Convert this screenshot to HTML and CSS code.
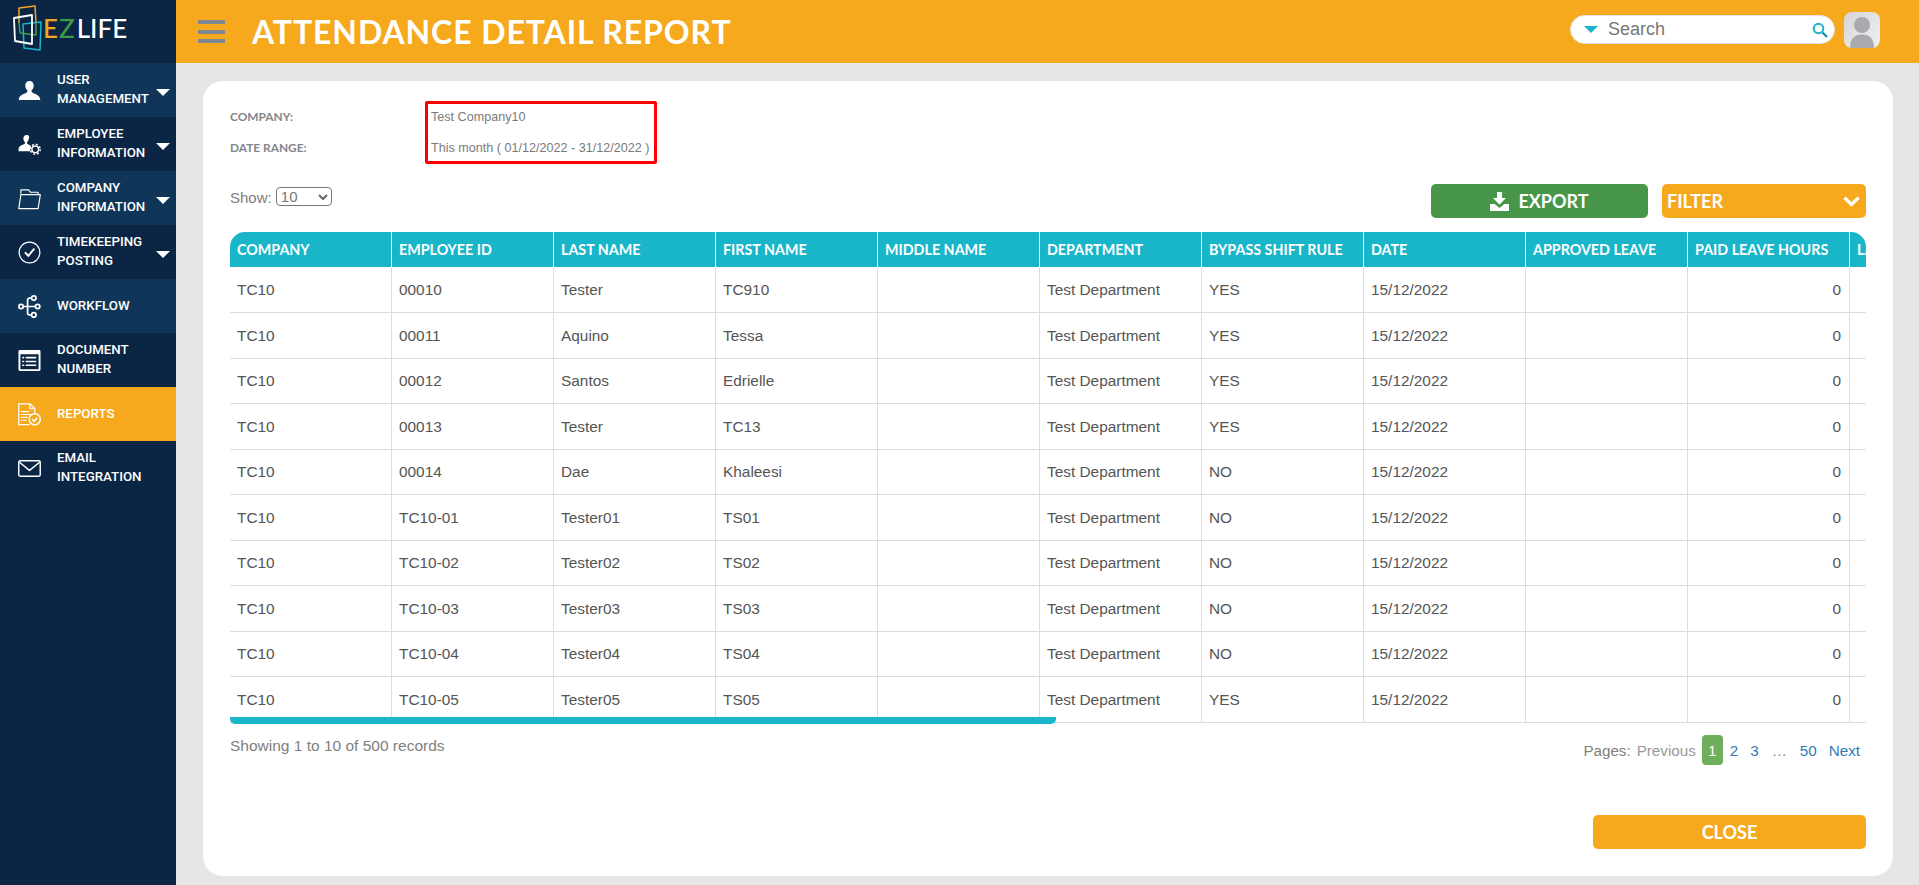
FILE: index.html
```html
<!DOCTYPE html>
<html lang="en">
<head>
<meta charset="utf-8">
<title>Attendance Detail Report</title>
<link rel="stylesheet" href="styles.css">
</head>
<body>
<aside class="sidebar">
  <div class="logo">
    <svg class="logo-mark" width="32" height="46" viewBox="0 0 32 46" fill="none" stroke-width="1.500" stroke-linejoin="round">
      <path d="M6 18V3l16-2 1 17" stroke="#f2a71f"/>
      <path d="M6 18l1 10 16 2V18" stroke="#4c9a44"/>
      <path d="M10 19l18-2-1 28-16-2z" stroke="#19b5c9"/>
      <path d="M1 13l18-3v29L2 36z" stroke="#ffffff" stroke-width="1.800"/>
    </svg>
    <span class="logo-text"><span class="logo-e">E</span><span class="logo-z">Z</span>LIFE</span>
  </div>
  <nav class="menu">
    <a class="menu-item alt">
      <svg class="menu-icon" viewBox="0 0 24 24" fill="#fff"><path d="M12 2c-3 0-4.600 2.200-4.400 5.200.1 1.800 1 3.600 2.200 4.600.3 1.300-.3 2.200-1.500 2.800C6 15.800 2.200 16.400.9 20.500L.8 22h22.400l-.1-1.500c-1.300-4.100-5.100-4.700-7.400-5.900-1.200-.6-1.800-1.500-1.500-2.800 1.200-1 2.100-2.800 2.200-4.600C16.600 4.200 15 2 12 2z"/></svg>
      <span class="menu-label">USER MANAGEMENT</span><i class="caret"></i>
    </a>
    <a class="menu-item">
      <svg class="menu-icon" viewBox="0 0 24 24" fill="#fff"><path d="M9 2c-2.400 0-3.600 1.800-3.400 4.100.1 1.400.8 2.700 1.700 3.500.2 1-.2 1.700-1.200 2.200C4.300 12.800.9 13.300.6 16.800V19h12.200a6 6 0 0 1 .9-5.400c-1.200-.8-2.400-1.200-3-1.800-1-.5-1.400-1.200-1.200-2.200.9-.8 1.600-2.100 1.700-3.500C12.400 3.800 11.400 2 9 2z"/><circle cx="18" cy="17" r="3.500" fill="none" stroke="#fff" stroke-width="1.600"/><circle cx="18" cy="17" r="5.200" fill="none" stroke="#fff" stroke-width="1.500" stroke-dasharray="2 2.080"/></svg>
      <span class="menu-label">EMPLOYEE INFORMATION</span><i class="caret"></i>
    </a>
    <a class="menu-item alt">
      <svg class="menu-icon" viewBox="0 0 24 24" fill="none" stroke="#fff" stroke-width="1.200" stroke-linejoin="round"><path d="M3 7V3h8l2 2.500h8V8"/><path d="M3 8h20.300l-2.300 14.500H.8z"/></svg>
      <span class="menu-label">COMPANY INFORMATION</span><i class="caret"></i>
    </a>
    <a class="menu-item">
      <svg class="menu-icon" viewBox="0 0 24 24" fill="none" stroke="#fff" stroke-linecap="round"><circle cx="12" cy="12" r="10.800" stroke-width="1.300"/><path d="M7.800 12.400l3 3 5.800-6.800" stroke-width="2"/></svg>
      <span class="menu-label">TIMEKEEPING POSTING</span><i class="caret"></i>
    </a>
    <a class="menu-item alt">
      <svg class="menu-icon" viewBox="0 0 24 24" fill="none" stroke="#fff" stroke-width="1.800"><circle cx="3.200" cy="12" r="2.300"/><circle cx="16.500" cy="3.200" r="2.300"/><circle cx="20.500" cy="12" r="2.300"/><circle cx="16.500" cy="20.800" r="2.300"/><path d="M5.500 12h12.700M14.200 3.200H12a2 2 0 0 0-2 2v13.600a2 2 0 0 0 2 2h2.200"/></svg>
      <span class="menu-label">WORKFLOW</span>
    </a>
    <a class="menu-item">
      <svg class="menu-icon" viewBox="0 0 24 24" fill="none"><path fill="#fff" fill-rule="evenodd" d="M2 1h20a1.500 1.500 0 0 1 1.500 1.500v19a1.500 1.500 0 0 1-1.500 1.500H2a1.500 1.500 0 0 1-1.500-1.500v-19A1.500 1.500 0 0 1 2 1zm.5 4.500V21h19V5.500z"/><path stroke="#fff" stroke-width="1.700" d="M4.500 9h2M8 9h11M4.500 13h2M8 13h11M4.500 17h2M8 17h11"/></svg>
      <span class="menu-label">DOCUMENT NUMBER</span>
    </a>
    <a class="menu-item active">
      <svg class="menu-icon" viewBox="0 0 24 24" fill="none" stroke="#fff" stroke-width="1.300"><path d="M12 22.500H.8V.8h11.700l5 5v5.500"/><path d="M12.500 1v5h5"/><path stroke-width="1.200" d="M3 9h9M3 12h10M3 15h7M3 18h6"/><circle cx="17.500" cy="17" r="5.800" stroke-width="1.500" fill="#f6a91d"/><path d="M14.800 17l2 2 3.200-3.600" stroke-width="1.700"/></svg>
      <span class="menu-label">REPORTS</span>
    </a>
    <a class="menu-item">
      <svg class="menu-icon" viewBox="0 0 24 24" fill="none" stroke="#fff" stroke-width="1.500" stroke-linejoin="round"><rect x=".8" y="4" width="22.400" height="16" rx="1.500"/><path d="M1.500 5.500L12 14l10.500-8.500"/></svg>
      <span class="menu-label">EMAIL INTEGRATION</span>
    </a>
  </nav>
</aside>

<div class="main">
  <header class="topbar">
    <div class="burger"><span></span><span></span><span></span></div>
    <h1 class="page-title">ATTENDANCE DETAIL REPORT</h1>
    <div class="search">
      <i class="search-caret"></i>
      <span class="search-text">Search</span>
      <svg class="search-icon" width="16" height="16" viewBox="0 0 16 16" fill="none" stroke="#19b5c9"><circle cx="6.500" cy="6.500" r="4.800" stroke-width="2"/><path d="M10.500 10.500L15 15" stroke-width="2.400" stroke="#1a8fa8"/></svg>
    </div>
    <div class="avatar">
      <svg width="36" height="36" viewBox="0 0 36 36"><circle cx="18" cy="13" r="8" fill="#a9aaae"/><path d="M6 36c0-9 4-13.500 12-13.500S30 27 30 36z" fill="#a9aaae"/></svg>
    </div>
  </header>

  <div class="content">
    <section class="card">
      <div class="info">
        <div class="info-labels">
          <div class="info-label">COMPANY:</div>
          <div class="info-label">DATE RANGE:</div>
        </div>
        <div class="info-values">
          <div class="info-value">Test Company10</div>
          <div class="info-value">This month ( 01/12/2022 - 31/12/2022 )</div>
        </div>
      </div>

      <div class="toolbar">
        <div class="show">Show: <span class="select">10<svg width="10" height="6" viewBox="0 0 10 6" fill="none" stroke="#666" stroke-width="2"><path d="M1 1l4 4 4-4"/></svg></span></div>
        <div class="actions">
          <button class="btn btn-export">
            <svg width="19" height="19" viewBox="0 0 19 19" fill="#fff"><path d="M7 0h5v6h4l-6.500 6.500L3 6h4z"/><path d="M0 12h4.500l5 4 5-4H19v7H0z"/></svg>
            EXPORT
          </button>
          <button class="btn btn-filter">
            FILTER
            <svg width="17" height="11" viewBox="0 0 17 11" fill="none" stroke="#fff" stroke-width="3.400"><path d="M1.500 1.800l7 6.700 7-6.700"/></svg>
          </button>
        </div>
      </div>

      <div class="table-wrap">
        <table class="grid">
          <thead>
            <tr><th>COMPANY</th><th>EMPLOYEE ID</th><th>LAST NAME</th><th>FIRST NAME</th><th>MIDDLE NAME</th><th>DEPARTMENT</th><th>BYPASS SHIFT RULE</th><th>DATE</th><th>APPROVED LEAVE</th><th>PAID LEAVE HOURS</th><th>LATE HOURS</th></tr>
          </thead>
          <tbody>
            <tr><td>TC10</td><td>00010</td><td>Tester</td><td>TC910</td><td></td><td>Test Department</td><td>YES</td><td>15/12/2022</td><td></td><td class="num">0</td><td></td></tr>
            <tr><td>TC10</td><td>00011</td><td>Aquino</td><td>Tessa</td><td></td><td>Test Department</td><td>YES</td><td>15/12/2022</td><td></td><td class="num">0</td><td></td></tr>
            <tr><td>TC10</td><td>00012</td><td>Santos</td><td>Edrielle</td><td></td><td>Test Department</td><td>YES</td><td>15/12/2022</td><td></td><td class="num">0</td><td></td></tr>
            <tr><td>TC10</td><td>00013</td><td>Tester</td><td>TC13</td><td></td><td>Test Department</td><td>YES</td><td>15/12/2022</td><td></td><td class="num">0</td><td></td></tr>
            <tr><td>TC10</td><td>00014</td><td>Dae</td><td>Khaleesi</td><td></td><td>Test Department</td><td>NO</td><td>15/12/2022</td><td></td><td class="num">0</td><td></td></tr>
            <tr><td>TC10</td><td>TC10-01</td><td>Tester01</td><td>TS01</td><td></td><td>Test Department</td><td>NO</td><td>15/12/2022</td><td></td><td class="num">0</td><td></td></tr>
            <tr><td>TC10</td><td>TC10-02</td><td>Tester02</td><td>TS02</td><td></td><td>Test Department</td><td>NO</td><td>15/12/2022</td><td></td><td class="num">0</td><td></td></tr>
            <tr><td>TC10</td><td>TC10-03</td><td>Tester03</td><td>TS03</td><td></td><td>Test Department</td><td>NO</td><td>15/12/2022</td><td></td><td class="num">0</td><td></td></tr>
            <tr><td>TC10</td><td>TC10-04</td><td>Tester04</td><td>TS04</td><td></td><td>Test Department</td><td>NO</td><td>15/12/2022</td><td></td><td class="num">0</td><td></td></tr>
            <tr><td>TC10</td><td>TC10-05</td><td>Tester05</td><td>TS05</td><td></td><td>Test Department</td><td>YES</td><td>15/12/2022</td><td></td><td class="num">0</td><td></td></tr>
          </tbody>
        </table>
        <div class="scroll-thumb"></div>
      </div>

      <div class="table-foot">
        <div class="records">Showing 1 to 10 of 500 records</div>
        <div class="pager">
          <span class="pager-label">Pages:</span>
          <span class="pager-prev">Previous</span>
          <span class="pager-current">1</span>
          <a class="pager-link">2</a>
          <a class="pager-link">3</a>
          <span class="pager-dots">…</span>
          <a class="pager-link">50</a>
          <a class="pager-link">Next</a>
        </div>
      </div>

      <div class="card-foot"><button class="btn btn-close">CLOSE</button></div>
    </section>
  </div>
</div>
</body>
</html>
```

FILE: styles.css
```css
* { box-sizing: border-box; }
html, body { height: 100%; }
body {
  margin: 0;
  display: flex;
  overflow: hidden;
  font-family: "Liberation Sans", Arial, sans-serif;
  background: #e6e6e6;
  color: #555;
}

/* sidebar */
.sidebar { width: 176px; flex: none; background: #0a2644; color: #fff; }
.logo { height: 63px; display: flex; align-items: center; padding-left: 13px; }
.logo-mark { flex: none; margin-top: -7px; }
.logo-text {
  font-family: Lato, sans-serif;
  font-size: 26px;
  font-weight: 500;
  margin-left: -2px;
  margin-top: -7px;
  color: #fff;
}
.logo-e { color: #f2a71f; margin-right: 1px; }
.logo-z { color: #3f9a47; margin-right: 2px; }
.menu { display: flex; flex-direction: column; }
.menu-item {
  height: 54px;
  display: flex;
  align-items: center;
  padding-left: 18px;
  position: relative;
}
.menu-item.alt { background: #0f3558; }
.menu-item.active { background: #f6a91d; }
.menu-icon { width: 23px; height: 23px; flex: none; }
.menu-label {
  font-family: Roboto, sans-serif;
  font-weight: 500;
  font-size: 13.300px;
  line-height: 19px;
  margin: 0 0 2px 16px;
  width: 96px;
  color: #fff;
}
.caret {
  position: absolute;
  left: 156px;
  top: 26px;
  border-left: 7.500px solid transparent;
  border-right: 7.500px solid transparent;
  border-top: 7px solid #fff;
}

/* header */
.main { flex: 1; min-width: 0; display: flex; flex-direction: column; }
.topbar {
  height: 63px;
  flex: none;
  background: #f6a91d;
  display: flex;
  align-items: center;
  padding-left: 22px;
}
.burger { width: 27px; display: flex; flex-direction: column; gap: 5.500px; }
.burger span { display: block; height: 4px; background: #7f8793; }
.page-title {
  margin: 0 0 0 27px;
  font-family: Lato, sans-serif;
  font-weight: 700;
  font-size: 32px;
  letter-spacing: .9px;
  color: #fff;
  flex: 1;
}
.search {
  width: 265px;
  height: 29px;
  margin-bottom: 4px;
  background: #fff;
  border: 1px solid #e2e2e2;
  border-radius: 15px;
  display: flex;
  align-items: center;
  padding: 0 6px 0 13px;
}
.search-caret {
  border-left: 7px solid transparent;
  border-right: 7px solid transparent;
  border-top: 7px solid #19b5c9;
}
.search-text { flex: 1; margin-left: 10px; font-size: 18px; color: #777; }
.search-icon { flex: none; }
.avatar {
  width: 36px;
  height: 36px;
  margin: 0 39px 4px 9px;
  border-radius: 8px;
  overflow: hidden;
  background: linear-gradient(135deg, #d6d6d8, #f0f0f0);
}
.avatar svg { display: block; }

/* card */
.content { flex: 1; min-height: 0; padding: 18px 26px 9px 27px; }
.card {
  height: 100%;
  background: #fff;
  border-radius: 20px;
  padding: 20px 27px 27px;
  display: flex;
  flex-direction: column;
}
.info { display: flex; color: #7a7a7a; height: 63px; }
.info-labels { width: 195px; padding-top: 8px; }
.info-label {
  font-family: Lato, sans-serif;
  font-weight: 700;
  font-size: 11.900px;
  height: 31px;
  line-height: 16px;
  color: #85858a;
}
.info-values {
  width: 232px;
  height: 63px;
  border: 3px solid #f00;
  border-radius: 2px;
  padding: 5px 0 0 3px;
  white-space: nowrap;
}
.info-value { font-size: 12.600px; height: 31px; line-height: 16px; }

.toolbar { display: flex; justify-content: space-between; margin-top: 20px; height: 34px; }
.show { font-size: 15px; color: #808080; margin-top: 3px; }
.select {
  display: inline-flex;
  align-items: center;
  justify-content: space-between;
  width: 56px;
  height: 19px;
  vertical-align: 1px;
  padding: 0 3px 0 4px;
  border: 1px solid #777;
  border-radius: 4px;
  color: #777;
  font-size: 15px;
}
.actions { display: flex; gap: 14px; }
.btn {
  border: 0;
  border-radius: 5px;
  height: 34px;
  color: #fff;
  font-family: Lato, sans-serif;
  font-weight: 700;
  font-size: 18px;
  display: flex;
  align-items: center;
  padding: 0;
}
.btn-export { width: 217px; background: #47964a; justify-content: center; gap: 9px; }
.btn-filter { width: 204px; background: #f6a91d; justify-content: space-between; padding: 0 6px 0 5px; }

/* table */
.table-wrap {
  position: relative;
  margin-top: 14px;
  height: 492px;
  overflow: hidden;
  border-radius: 15px 15px 0 0;
}
.grid { border-collapse: separate; border-spacing: 0; table-layout: fixed; width: 1782px; }
.grid th, .grid td { width: 162px; padding: 0 7px; text-align: left; white-space: nowrap; }
.grid th {
  height: 35px;
  background: #19b5c9;
  color: #fff;
  font-family: Lato, sans-serif;
  font-weight: 700;
  font-size: 14.300px;
  border-right: 1px solid #fff;
}
.grid td {
  height: 45.500px;
  padding-top: 1px;
  font-size: 15.400px;
  color: #555;
  border-right: 1px solid #ddd;
  border-bottom: 1px solid #ddd;
}
.grid tbody tr:first-child td { height: 46px; }
.grid td.num { text-align: right; padding-right: 8px; }
.scroll-thumb {
  position: absolute;
  left: 0;
  top: 485px;
  width: 826px;
  height: 7px;
  background: #19b5c9;
  border-radius: 0 0 5px 5px;
}

.table-foot { display: flex; justify-content: space-between; align-items: flex-start; margin-top: 8px; }
.records { font-size: 15.500px; color: #808080; padding-top: 5px; }
.pager {
  display: flex;
  align-items: center;
  height: 30px;
  margin-top: 3px;
  padding-right: 6px;
  font-size: 15.200px;
}
.pager-label { color: #808080; }
.pager-prev { color: #999; margin-left: 6px; }
.pager-current {
  width: 21px;
  height: 30px;
  margin: 0 7px 0 6px;
  background: #6fae5a;
  color: #fff;
  border-radius: 4px;
  display: flex;
  align-items: center;
  justify-content: center;
}
.pager-link { color: #337ab7; margin-right: 12px; }
.pager-link:last-child { margin-right: 0; }
.pager-dots { color: #808080; margin: 0 13px 0 1px; }
.card-foot { margin-top: auto; display: flex; justify-content: flex-end; }
.btn-close { width: 273px; background: #f6a91d; justify-content: center; }
```
